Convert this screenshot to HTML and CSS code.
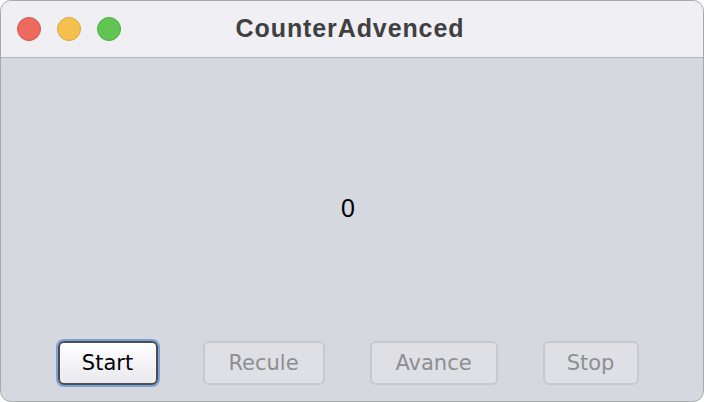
FILE: index.html
```html
<!DOCTYPE html>
<html>
<head>
<meta charset="utf-8">
<link rel="stylesheet" href="styles.css">
</head>
<body>
<div class="window">
  <div class="titlebar">
    <div class="lights">
      <span class="light red"></span>
      <span class="light yellow"></span>
      <span class="light green"></span>
    </div>
    <div class="title">CounterAdvenced</div>
  </div>
  <div class="content">
    <div class="counter">0</div>
    <div class="buttons">
      <button class="btn primary w-start">Start</button>
      <button class="btn disabled w-recule">Recule</button>
      <button class="btn disabled w-avance">Avance</button>
      <button class="btn disabled w-stop">Stop</button>
    </div>
  </div>
</div>
</body>
</html>
```

FILE: styles.css
```css
html, body {
  margin: 0;
  padding: 0;
  background: #ffffff;
}
.window {
  width: 704px;
  height: 402px;
  box-sizing: border-box;
  border: 1px solid #a9a9ab;
  border-radius: 11px;
  overflow: hidden;
  display: flex;
  flex-direction: column;
  background: #d6d8df;
}
.titlebar {
  height: 56px;
  background: #efeff4;
  border-bottom: 1px solid #b5b5b8;
  position: relative;
  display: flex;
  align-items: center;
  justify-content: center;
  flex-shrink: 0;
}
.lights {
  position: absolute;
  left: 16px;
  top: 16px;
  display: flex;
  gap: 16px;
}
.light {
  width: 24px;
  height: 24px;
  border-radius: 50%;
  box-sizing: border-box;
}
.red { background: #ed6a5e; border: 1px solid #d5554b; }
.yellow { background: #f6c04f; border: 1px solid #dfa63b; }
.green { background: #61c554; border: 1px solid #4fad43; }
.title {
  font-family: "Liberation Sans", Arial, sans-serif;
  font-weight: bold;
  font-size: 25px;
  letter-spacing: 0.9px;
  color: #404040;
  position: relative;
  left: -2px;
  top: -1px;
}
.content {
  flex: 1;
  display: flex;
  flex-direction: column;
}
.counter {
  flex: 1;
  display: flex;
  align-items: center;
  justify-content: center;
  font-family: "Liberation Sans", Arial, sans-serif;
  font-size: 25px;
  color: #000;
  padding-top: 18px;
  padding-right: 8px;
}
.buttons {
  display: flex;
  justify-content: center;
  gap: 45px;
  padding: 0 0 16px 0;
  margin-left: -8px;
}
.btn {
  height: 44px;
  box-sizing: border-box;
  border-radius: 6px;
  font-family: "DejaVu Sans", sans-serif;
  font-size: 21px;
  padding: 0;
  margin: 0;
}
.primary {
  background: linear-gradient(#ffffff, #e9e9ee);
  border: 2px solid #4b4b50;
  color: #000;
  box-shadow: 0 0 0 2px #78a3d4;
}
.disabled {
  background: #dfe0e5;
  border: 2px solid #c7c9ce;
  color: #8e8e90;
}
.w-start { width: 100px; }
.w-recule { width: 122px; }
.w-avance { width: 128px; }
.w-stop { width: 96px; }
```
